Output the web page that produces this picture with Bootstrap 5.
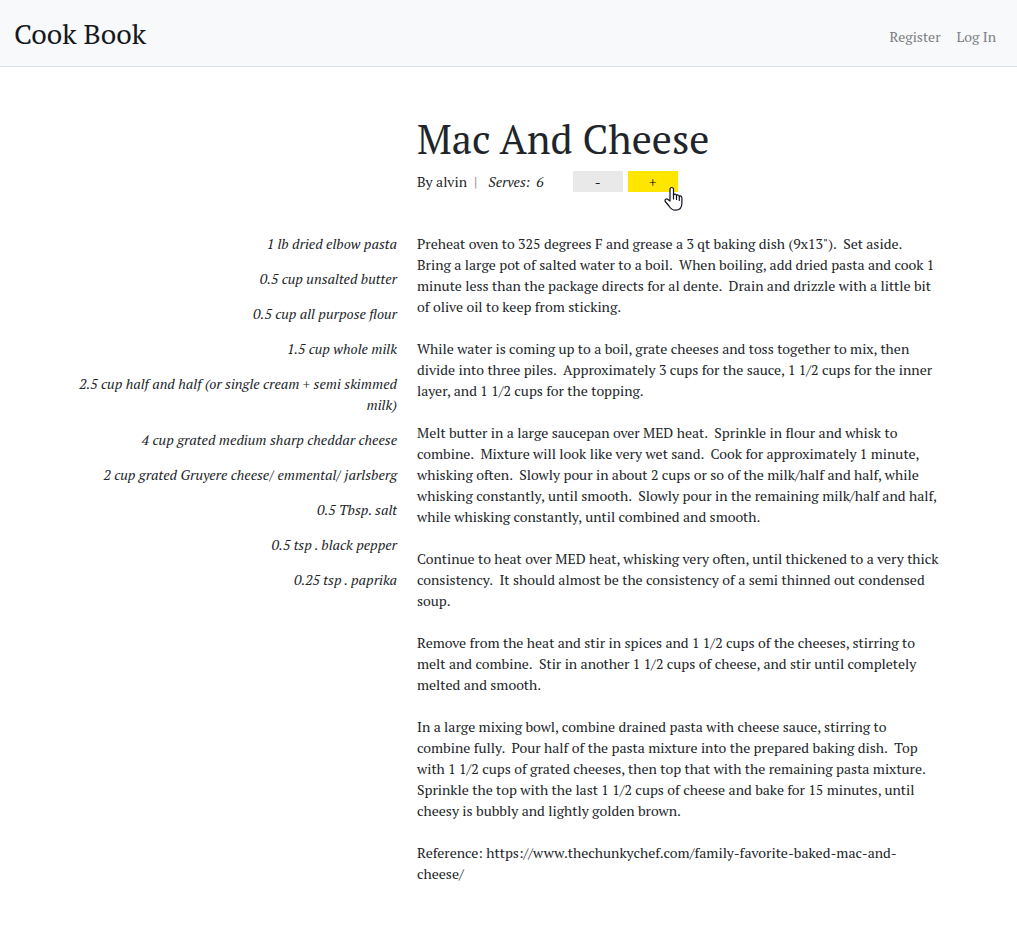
<!DOCTYPE html>
<html lang="en">
<head>
<meta charset="utf-8">
<meta name="viewport" content="width=device-width, initial-scale=1">
<title>Cook Book</title>
<link href="https://cdn.jsdelivr.net/npm/bootstrap@5.3.0/dist/css/bootstrap.min.css" rel="stylesheet">
<style>
  body { font-family: "PT Serif", "Liberation Serif", serif; font-size: 14px; line-height: 21px; color: #212529; }
  .site-nav { background: #f8f9fb; border-bottom: 1px solid #dcdfe8; padding: 10px 13px 8px 14px; }
  .site-nav .navbar-brand { font-size: 28px; line-height: 38px; color: #16181b; padding: 5px 0; }
  .site-nav .navbar-nav { padding-top: 4px; }
  .site-nav .nav-link { font-size: 14px; line-height: 21px; color: #7d7e80; padding: 8px; }
  .recipe { display: grid; grid-template-columns: minmax(0, 320px) minmax(0, 523px); column-gap: 20px; justify-content: center; padding-top: 48px; }
  .recipe-head, .steps { grid-column: 2; }
  .recipe-head h1 { font-size: 40px; line-height: 48px; font-weight: 400; margin-bottom: 8px; }
  .divider { padding: 0 11px 0 7px; color: #777; }
  .serves { gap: 6px; }
  .serve-group { margin-left: 29px; gap: 5px; }
  .serve-btn { width: 50px; height: 21px; border: 0; padding: 0; background: #e9e9e9; color: #000; font-size: 14px; line-height: 21px; }
  .serve-btn.active { background: #ffe600; }
  .hand { position: absolute; left: 36px; top: 15px; pointer-events: none; }
  .ingredients { grid-column: 1; text-align: right; font-style: italic; }
  .ingredients li { margin-bottom: 14px; }
  .ingredients, .steps { margin-top: 41px; }
  .steps p { white-space: pre-wrap; margin-bottom: 21px; }
</style>
</head>
<body>
<nav class="navbar navbar-expand site-nav">
  <a class="navbar-brand m-0" href="#">Cook Book</a>
  <div class="navbar-nav ms-auto">
    <a class="nav-link" href="#">Register</a>
    <a class="nav-link" href="#">Log In</a>
  </div>
</nav>
<main class="recipe">
  <header class="recipe-head">
    <h1>Mac And Cheese</h1>
    <div class="d-flex align-items-center">
      <span>By alvin</span>
      <span class="divider">|</span>
      <em class="d-flex serves"><span>Serves:</span> <span>6</span></em>
      <div class="d-flex serve-group">
        <button type="button" class="serve-btn" aria-label="Fewer servings">-</button>
        <div class="position-relative d-flex">
          <button type="button" class="serve-btn active" aria-label="More servings">+</button>
          <svg class="hand" width="19" height="26" viewBox="0 0 19 26" aria-hidden="true"><path d="M6 15V3.500C6 .8 9.500.8 9.500 3.500V9C10 7.500 12.500 7.800 12.500 9.700 13 8.500 15.300 8.800 15.300 10.500 16 9.500 17.900 10 17.900 12V17C17.900 21.500 15.500 24.200 11.500 24.200 8 24.200 6.500 22.500 5 20L1.300 15.500C.2 13.500 2.500 12.300 4 13.500Z" fill="#fff" stroke="#111122" stroke-width="1.200" stroke-linejoin="round"/><path d="M9.500 8v5M12.500 9.500v4M15.300 10.500v4" fill="none" stroke="#111122" stroke-width="1.200" stroke-linecap="round"/></svg>
        </div>
      </div>
    </div>
  </header>
  <ul class="ingredients list-unstyled">
    <li>1 lb dried elbow pasta</li>
    <li>0.5 cup unsalted butter</li>
    <li>0.5 cup all purpose flour</li>
    <li>1.5 cup whole milk</li>
    <li>2.5 cup half and half (or single cream + semi skimmed milk)</li>
    <li>4 cup grated medium sharp cheddar cheese</li>
    <li>2 cup grated Gruyere cheese/ emmental/ jarlsberg</li>
    <li>0.5 Tbsp. salt</li>
    <li>0.5 tsp . black pepper</li>
    <li>0.25 tsp . paprika</li>
  </ul>
  <section class="steps">
    <p>Preheat oven to 325 degrees F and grease a 3 qt baking dish (9x13").  Set aside.  Bring a large pot of salted water to a boil.  When boiling, add dried pasta and cook 1 minute less than the package directs for al dente.  Drain and drizzle with a little bit of olive oil to keep from sticking.</p>
    <p>While water is coming up to a boil, grate cheeses and toss together to mix, then divide into three piles.  Approximately 3 cups for the sauce, 1 1/2 cups for the inner layer, and 1 1/2 cups for the topping.</p>
    <p>Melt butter in a large saucepan over MED heat.  Sprinkle in flour and whisk to combine.  Mixture will look like very wet sand.  Cook for approximately 1 minute, whisking often.  Slowly pour in about 2 cups or so of the milk/half and half, while whisking constantly, until smooth.  Slowly pour in the remaining milk/half and half, while whisking constantly, until combined and smooth.</p>
    <p>Continue to heat over MED heat, whisking very often, until thickened to a very thick consistency.  It should almost be the consistency of a semi thinned out condensed soup.</p>
    <p>Remove from the heat and stir in spices and 1 1/2 cups of the cheeses, stirring to melt and combine.  Stir in another 1 1/2 cups of cheese, and stir until completely melted and smooth.</p>
    <p>In a large mixing bowl, combine drained pasta with cheese sauce, stirring to combine fully.  Pour half of the pasta mixture into the prepared baking dish.  Top with 1 1/2 cups of grated cheeses, then top that with the remaining pasta mixture.  Sprinkle the top with the last 1 1/2 cups of cheese and bake for 15 minutes, until cheesy is bubbly and lightly golden brown.</p>
    <p>Reference: https://www.thechunkychef.com/family-favorite-baked-mac-and-cheese/</p>
  </section>
</main>
<script src="https://cdn.jsdelivr.net/npm/bootstrap@5.3.0/dist/js/bootstrap.bundle.min.js"></script>
</body>
</html>
